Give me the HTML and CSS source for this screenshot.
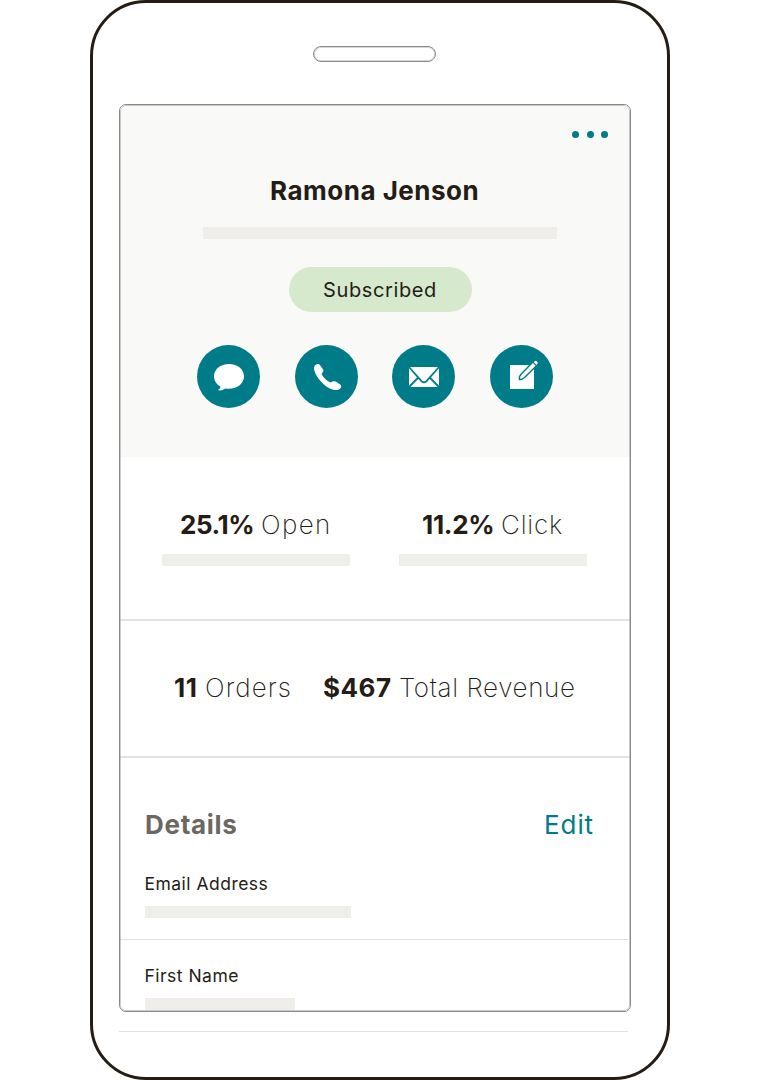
FILE: index.html
```html
<!DOCTYPE html>
<html lang="en">
<head>
<meta charset="utf-8">
<title>Contact profile</title>
<link rel="stylesheet" href="styles.css">
</head>
<body>
<div class="phone">
  <div class="speaker"></div>
  <main class="screen">
    <header class="profile">
      <div class="menu"><svg width="38" height="8" viewBox="0 0 38 8"><circle cx="4.5" cy="4.5" r="3.5"/><circle cx="19.5" cy="4.5" r="3.5"/><circle cx="33.5" cy="4.5" r="3.5"/></svg></div>
      <h1 class="name"><span>Ramona Jenson</span></h1>
      <div class="bar bar-name"></div>
      <div class="pill"><span>Subscribed</span></div>
      <nav class="actions">
        <svg class="action" viewBox="0 0 63 63"><circle class="disc" cx="31.5" cy="31.5" r="31.5"/><path class="ink" d="M32 19C23.500 19 17 24.300 17 31.200C17 35.400 19.300 39 23.200 41.300C23.600 43 22.600 44.300 20.800 45C23.500 46 26.300 45.100 28.100 43.400C29.300 43.700 30.700 43.800 32 43.800C40.500 43.800 47 38.300 47 31.300S40.500 19 32 19Z"/></svg>
        <svg class="action" viewBox="0 0 63 63"><circle class="disc" cx="31.500" cy="31.500" r="31.500"/><path class="ink" d="M22.400 19.100C20 19.800 18.700 21.500 19.100 24.200C20.200 31.800 29.300 41.900 37.500 44.600C41 45.700 44.600 45 46 42.500C46.500 41 46 40 45 39.300C43.500 38.700 41.800 36.600 40.300 36.400C38.500 36.100 37.300 36.800 35.500 37.500C31.700 35.900 28.500 32.800 26.600 29C27.400 27.400 28.700 26.500 28.400 25.100C28.100 24 25.500 20.900 24.700 19.800C24.100 19 23.300 18.800 22.400 19.100Z"/></svg>
        <svg class="action" viewBox="0 0 63 63"><circle class="disc" cx="31.500" cy="31.500" r="31.500"/><path class="ink" d="M17 22H47V42H17Z"/><path class="cut" d="M16.500 21.500L29.700 36.300Q32 38.500 34.300 36.300L47.500 21.500M16.500 42.500L26.300 32.500M47.500 42.500L37.700 32.500"/></svg>
        <svg class="action" viewBox="0 0 63 63"><circle class="disc" cx="31.500" cy="31.500" r="31.500"/><path class="ink" d="M20 20H44V44H20Z"/><path class="pencil" d="M29.500 34.500C28.900 32.300 29.600 30.700 31.300 29L44.300 15.500Q45.700 14.200 47.500 15.900T48 19.200L34.500 32.500C32.800 34 31.700 34.800 29.500 34.500Z"/><path class="cut thin" d="M42.700 17L46.400 20.700"/></svg>
      </nav>
    </header>
    <section class="rates">
      <div class="rate"><p class="stat"><b class="n-open">25.1%</b><span class="t-open">Open</span></p><div class="bar"></div></div>
      <div class="rate"><p class="stat"><b class="n-click">11.2%</b><span class="t-click">Click</span></p><div class="bar"></div></div>
    </section>
    <section class="sales">
      <p class="stat orders"><b class="n-orders">11</b><span class="t-orders">Orders</span></p>
      <p class="stat revenue"><b class="n-revenue">$467</b><span class="t-revenue">Total Revenue</span></p>
    </section>
    <section class="details">
      <div class="heading"><h2>Details</h2><a class="edit">Edit</a></div>
      <div class="field email"><span class="label">Email Address</span><div class="bar bar-email"></div></div>
      <div class="field"><span class="label">First Name</span><div class="bar bar-first"></div></div>
    </section>
  </main>
  <div class="next-line"></div>
</div>
</body>
</html>
```
FILE: styles.css
```css
* { box-sizing: border-box; }
body { margin: 0; background: #fff; font-family: Inter, "Liberation Sans", sans-serif; color: #241c15; }
h1, h2, p { margin: 0; }
.phone { width: 580px; height: 1080px; margin: 0 auto; border: 3px solid #241c15; border-radius: 56px; padding: 43px 0 0 26px; overflow: hidden; }
.speaker { width: 123px; height: 16px; margin-left: 194px; border: 1px solid #898989; border-radius: 8px; box-shadow: inset 0 0 0 1px #d8d8d8; }
.screen { width: 512px; height: 908px; margin-top: 42px; border: 1px solid #898989; border-radius: 7px; overflow: hidden; position: relative; }
/* Soft inner edge of the screen outline */
.screen::after { content: ""; position: absolute; inset: 0; border: 1px solid rgba(137,137,137,.45); border-radius: 6px; }
.bar { height: 12px; background: #efeeea; }
.profile { height: 352px; padding-top: 25px; background: #f9f9f7; }
.menu { height: 8px; padding-left: 451px; }
.menu svg { display: block; fill: #007c89; }
.name { margin: 37px 0 0 150px; font-size: 26px; line-height: 32px; font-weight: 700; letter-spacing: .5px; white-space: nowrap; }
.bar-name { width: 354px; margin: 20px 0 0 83px; }
.pill { width: 183px; height: 45px; margin: 28px 0 0 169px; padding: 1px 0 0 34px; border-radius: 23px; background: #d6e9cd; font-size: 20px; line-height: 45px; letter-spacing: .62px; }
.actions { display: flex; justify-content: space-between; width: 356px; margin: 33px 0 0 77px; }
.action { display: block; width: 63px; height: 63px; }
.disc { fill: #007c89; }
.ink { fill: #fff; }
.cut { fill: none; stroke: #007c89; stroke-width: 1.8; }
.thin { stroke-width: 1.2; }
.pencil { fill: #fff; stroke: #007c89; stroke-width: 1.4; }
.rates { display: flex; gap: 49px; height: 164px; padding: 52px 0 0 42px; border-bottom: 2px solid #e4e4de; }
.rate { width: 188px; }
.rate .stat { margin-bottom: 13px; padding-left: 18px; }
.rate + .rate .stat { padding-left: 23px; }
.stat { display: flex; font-size: 26px; line-height: 32px; white-space: nowrap; }
.stat b { font-weight: 700; }
.stat span { font-weight: 250; }
.n-open { width: 81px; letter-spacing: -.4px; }
.n-click { width: 79px; letter-spacing: -.3px; }
.t-open { letter-spacing: 1.4px; }
.t-click { letter-spacing: .8px; }
.t-orders { letter-spacing: 1.1px; }
.sales { display: flex; height: 137px; padding: 51px 0 0 54px; border-bottom: 2px solid #e4e4de; }
.orders { width: 149px; }
.n-orders { width: 31px; letter-spacing: .5px; }
.n-revenue { width: 76px; letter-spacing: .5px; }
.t-revenue { letter-spacing: .62px; }
.details { padding-top: 51px; }
.heading { display: flex; justify-content: space-between; padding: 0 36px 0 25px; font-size: 26px; line-height: 32px; }
h2 { font-size: 26px; font-weight: 700; letter-spacing: .7px; color: #6c6761; }
.edit { color: #007c89; letter-spacing: .9px; }
.field { padding: 25px 0 0 25px; }
.email { width: 508px; height: 99px; padding-top: 32px; border-bottom: 1px solid #e0e0dc; }
.label { display: block; height: 22px; margin: 0 0 11px -.5px; font-size: 17.5px; line-height: 22px; letter-spacing: .48px; }
.bar-email { width: 206px; }
.bar-first { width: 150px; }
.next-line { width: 509px; height: 1px; margin-top: 19px; background: #e0e0dc; }
```
